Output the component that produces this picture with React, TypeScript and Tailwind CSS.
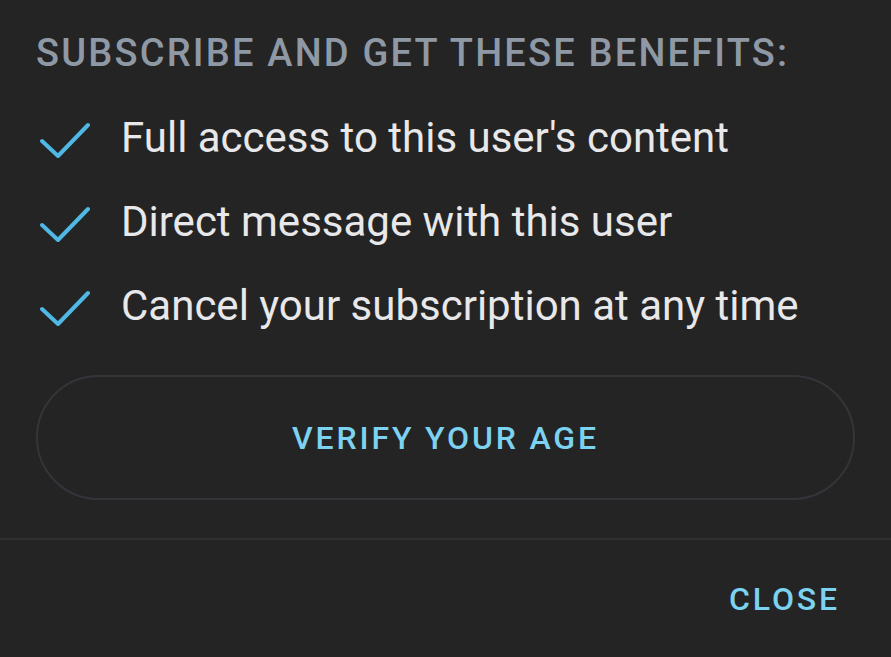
import React from 'react';

const benefits = [
  "Full access to this user's content",
  'Direct message with this user',
  'Cancel your subscription at any time',
];

const Check: React.FC = () => (
  <svg width={54} height={40} viewBox="0 0 54 40" fill="none" className="shrink-0">
    <path
      d="M4 23 L20 38 L50 7"
      stroke="#4fb8e4"
      strokeWidth={4}
      strokeLinecap="round"
      strokeLinejoin="round"
    />
  </svg>
);

export default function App() {
  return (
    <div className="w-[891px] h-[657px] bg-[#242424] flex flex-col overflow-hidden font-['Roboto',sans-serif]">
      <div className="px-[36px] pt-[33px]">
        <h2 className="text-[38px] leading-[40px] font-medium tracking-[2.2px] whitespace-nowrap text-[#8f99a6]">
          SUBSCRIBE AND GET THESE BENEFITS:
        </h2>

        {/* benefit list */}
        <ul className="mt-[23px]">
          {benefits.map((b) => (
            <li key={b} className="h-[84px] flex items-center gap-[29px] pl-[2px]">
              <Check />
              <span className="text-[42px] leading-[84px] text-[#e8e8ea]">{b}</span>
            </li>
          ))}
        </ul>

        <button className="mt-[27px] w-full h-[125px] rounded-full border-2 border-[#34353a] flex items-center justify-center text-[32px] font-medium tracking-[0.089em] text-[#7cd2f1]">
          VERIFY YOUR AGE
        </button>
      </div>

      <div className="mt-[38px] border-t-2 border-[#303030] flex-1 flex items-center justify-end pr-[51px]">
        <button className="text-[32px] font-medium tracking-[0.089em] text-[#7cd2f1]">CLOSE</button>
      </div>
    </div>
  );
}
